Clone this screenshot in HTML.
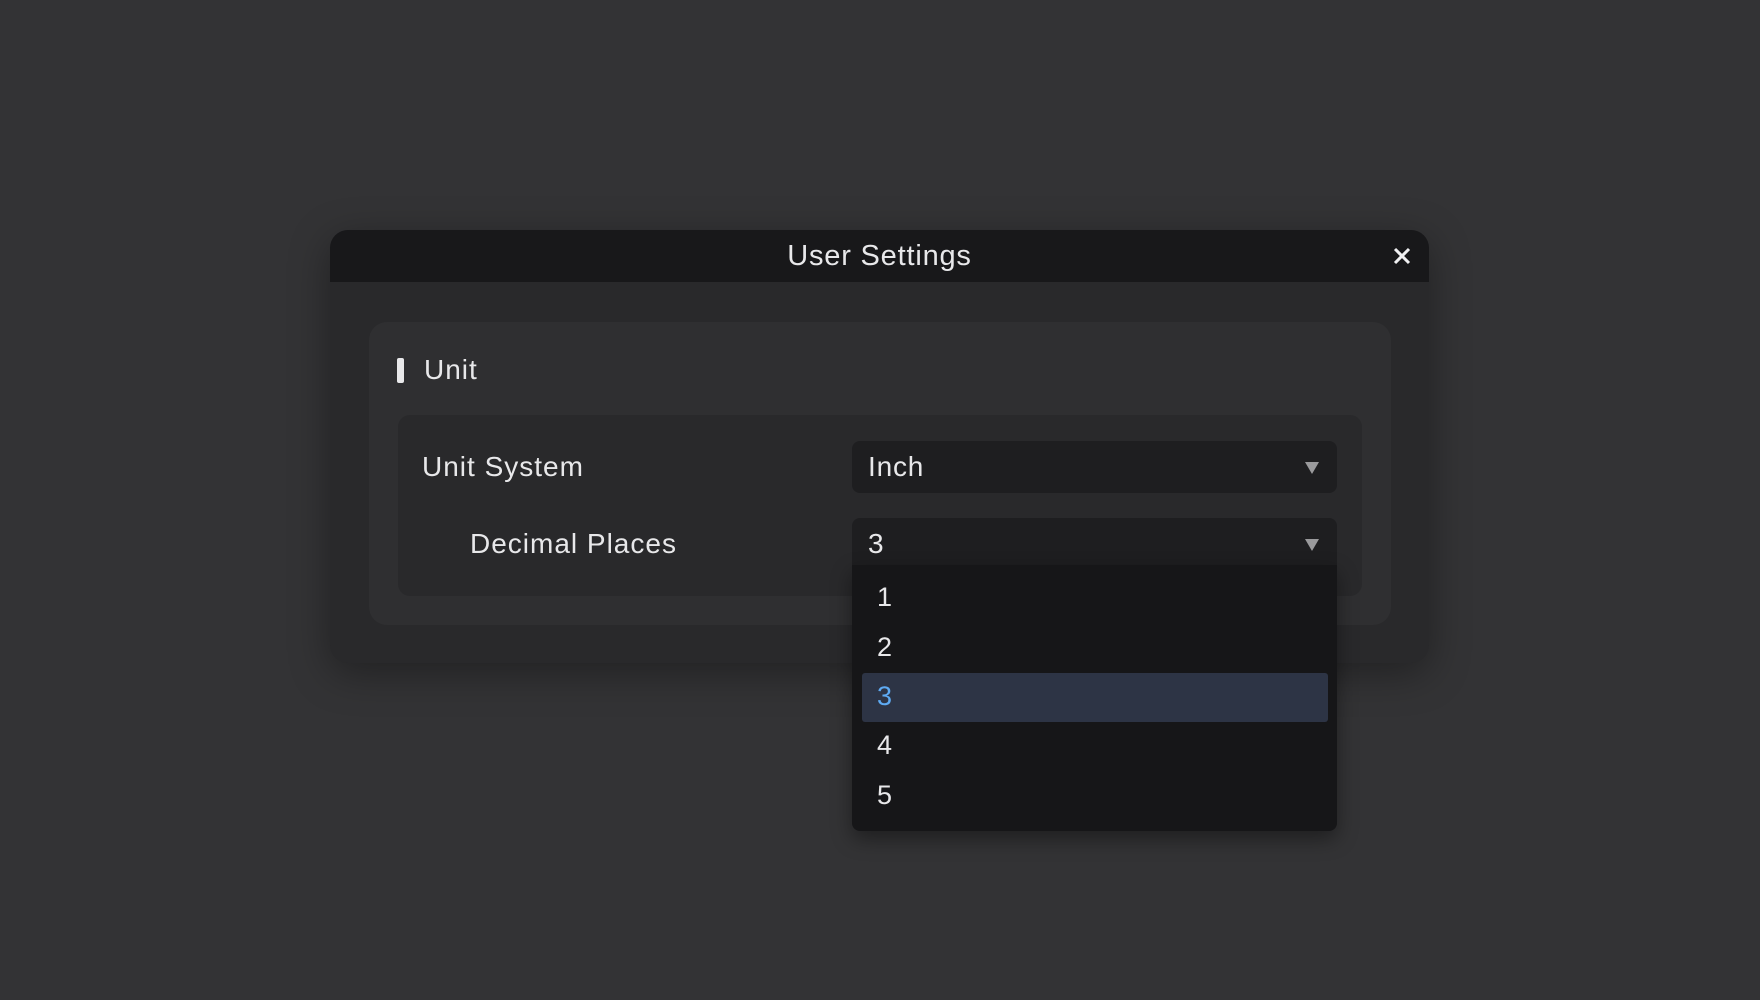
<!DOCTYPE html>
<html><head><meta charset="utf-8"><style>
*{margin:0;padding:0;box-sizing:border-box}
body{width:1760px;height:1000px;background:#333335;font-family:"Liberation Sans",sans-serif;color:#e8e8ea;position:relative;overflow:hidden}
.a{position:absolute}
.dlg{left:330px;top:230px;width:1099px;height:433px;background:#29292b;border-radius:18px;box-shadow:0 10px 40px rgba(0,0,0,.35);overflow:hidden}
.hdr{left:0;top:0;width:100%;height:52px;background:#18181a;text-align:center;font-size:29px;line-height:52px;letter-spacing:0.8px}
.card{left:39px;top:92px;width:1022px;height:303px;background:#2f2f31;border-radius:18px}
.inner{left:68px;top:185px;width:964px;height:181px;background:#29292b;border-radius:12px}
.sel{left:522px;width:485px;height:52px;background:#1e1e20;border-radius:8px;font-size:28px;line-height:52px;padding-left:16px;letter-spacing:0.8px}
.tri{position:absolute;right:18px;top:21px;width:0;height:0;border-left:7px solid transparent;border-right:7px solid transparent;border-top:12px solid #9a9a9c}
.lbl{font-size:28px;line-height:40px;letter-spacing:1px}
.dd{left:852px;top:565px;width:485px;height:266px;background:#161618;border-radius:0 0 8px 8px;box-shadow:0 8px 20px rgba(0,0,0,.4)}
.it{position:absolute;left:25px;font-size:27px;line-height:40px}
</style></head><body>
<div class="a dlg">
 <div class="a hdr">User Settings</div>
 <svg class="a" style="left:1063px;top:17px" width="18" height="18" viewBox="0 0 18 18"><path d="M2 2L16 16M16 2L2 16" stroke="#f0f0f2" stroke-width="3"/></svg>
 <div class="a card"></div>
 <div class="a" style="left:67px;top:128px;width:7px;height:25px;background:#e8e8ea;border-radius:2px"></div>
 <div class="a lbl" style="left:94px;top:120px">Unit</div>
 <div class="a inner"></div>
 <div class="a lbl" style="left:92px;top:217px">Unit System</div>
 <div class="a lbl" style="left:140px;top:294px">Decimal Places</div>
 <div class="a sel" style="top:211px">Inch<div class="tri"></div></div>
 <div class="a sel" style="top:288px;border-radius:8px 8px 0 0;height:47px">3<div class="tri"></div></div>
</div>
<div class="a dd">
 <div class="it" style="top:12px">1</div>
 <div class="it" style="top:62px">2</div>
 <div class="a" style="left:10px;top:108px;width:466px;height:49px;background:#2d3445;border-radius:3px"></div>
 <div class="it" style="top:111px;color:#5eaaf2">3</div>
 <div class="it" style="top:160px">4</div>
 <div class="it" style="top:210px">5</div>
</div>
</body></html>
